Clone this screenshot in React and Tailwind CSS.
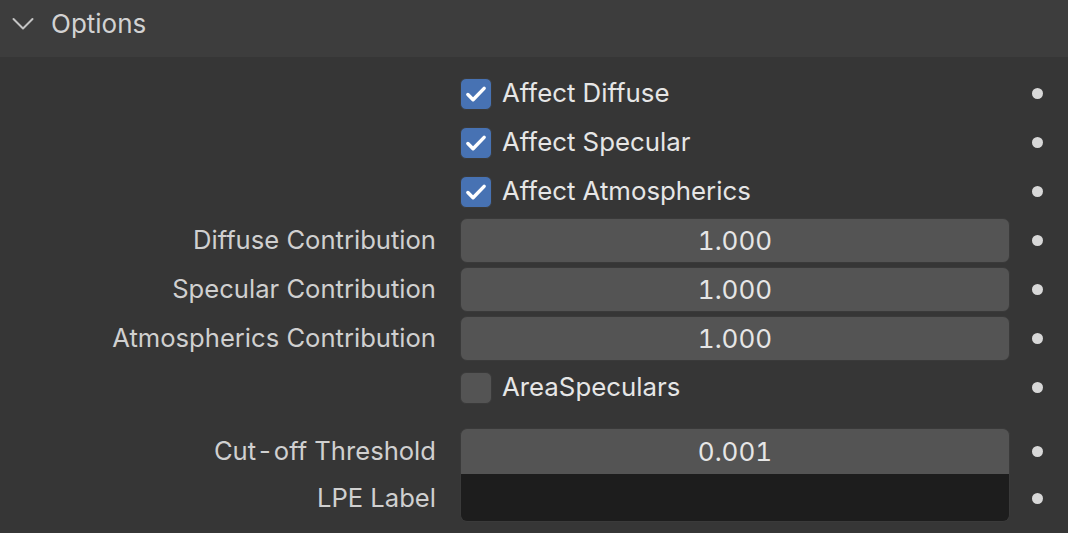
const font = { fontFamily: "Inter, 'Noto Sans', sans-serif" };

function Dot() {
  return (
    <div className="w-[54px] flex items-center justify-center">
      <div className="w-[11px] h-[11px] rounded-full bg-[#d8d8d8]" />
    </div>
  );
}

function CheckRow({ label, checked }) {
  return (
    <div className="flex h-[45px] items-center">
      <div className="w-[436px]" />
      <div className="w-[24px]" />
      <div className="w-[550px] flex items-center gap-[10px]">
        {checked ? (
          <div className="w-[32px] h-[32px] rounded-[6px] bg-[#4772b3] border border-[#3a3a3a] flex items-center justify-center">
            <svg width="26" height="26" viewBox="0 0 24 24" fill="none" stroke="white" strokeWidth="3.2" strokeLinecap="round" strokeLinejoin="round">
              <path d="M4.5 12.5l4.8 4.8L19.5 6.8" />
            </svg>
          </div>
        ) : (
          <div className="w-[32px] h-[32px] rounded-[6px] bg-[#545454] border border-[#3a3a3a]" />
        )}
        <span className="text-[25.8px] text-[#e6e6e6]">{label}</span>
      </div>
      <Dot />
    </div>
  );
}

function NumRow({ label, value, h = "h-[45px]", className = "rounded-[7px]", dark }) {
  return (
    <div className={`flex ${h} items-stretch`}>
      <div className="w-[436px] flex items-center justify-end text-[25.6px] text-[#d0d0d0]">{label}</div>
      <div className="w-[24px]" />
      <div
        className={`w-[550px] flex items-center justify-center text-[26px] tabular-nums text-[#e6e6e6] border border-[#3a3a3a] ${
          dark ? "bg-[#1d1d1d]" : "bg-[#545454]"
        } ${className}`}
      >
        {value}
      </div>
      <Dot />
    </div>
  );
}

export default function App() {
  return (
    <div className="w-[1068px] h-[533px] bg-[#363636] overflow-hidden" style={font}>
      <div className="h-[57px] bg-[#3d3d3d] flex items-center pl-[12px] pb-[9px] gap-[17px]">
        <svg width="22" height="14" viewBox="0 0 22 14" fill="none" stroke="#c4c4c4" strokeWidth="2" strokeLinecap="round" strokeLinejoin="round">
          <path d="M1.5 2l9.5 9.5L20.5 2" />
        </svg>
        <span className="text-[26px] text-[#d2d2d2] pb-[2px]">Options</span>
      </div>
      <div className="pt-[14px] flex flex-col gap-[4px]">
        <CheckRow label="Affect Diffuse" checked />
        <CheckRow label="Affect Specular" checked />
        <CheckRow label="Affect Atmospherics" checked />
        <NumRow label="Diffuse Contribution" value="1.000" />
        <NumRow label="Specular Contribution" value="1.000" />
        <NumRow label="Atmospherics Contribution" value="1.000" />
        <CheckRow label="AreaSpeculars" />
      </div>
      <div className="pt-[18px] flex flex-col">
        <NumRow
          label={<span>Cut<span className="mx-[3px]">-</span>off Threshold</span>}
          value="0.001"
          h="h-[46px]"
          className="rounded-t-[7px] border-b-0"
        />
        <NumRow label="LPE Label" value="" h="h-[48px]" dark className="rounded-b-[7px] border-t-0" />
      </div>
    </div>
  );
}
